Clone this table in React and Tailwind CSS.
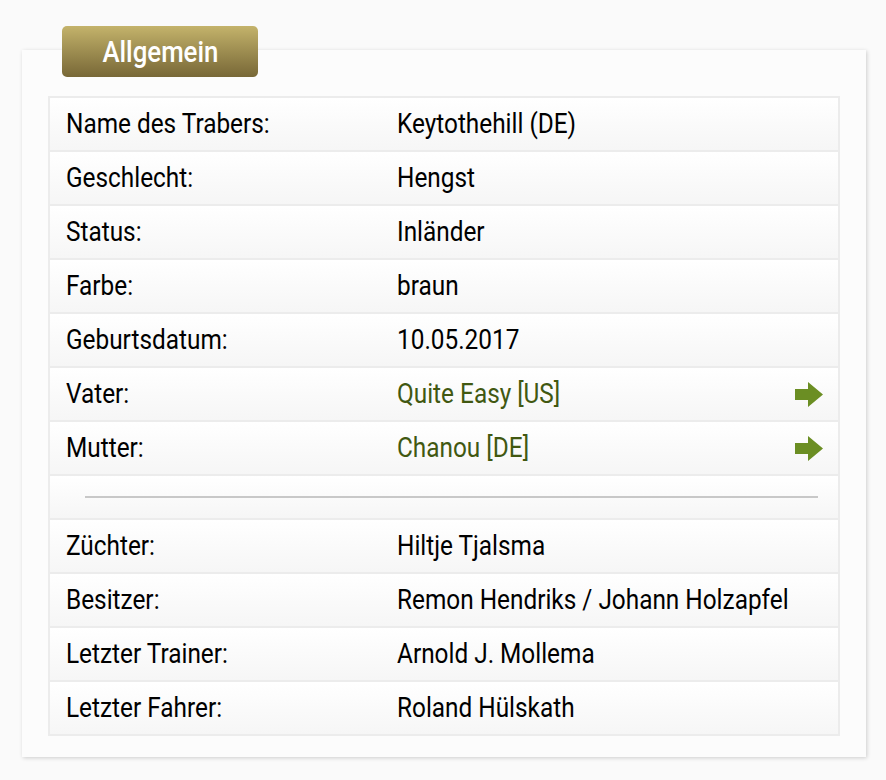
const rows = [
  { label: 'Name des Trabers:', value: 'Keytothehill (DE)' },
  { label: 'Geschlecht:', value: 'Hengst' },
  { label: 'Status:', value: 'Inländer' },
  { label: 'Farbe:', value: 'braun' },
  { label: 'Geburtsdatum:', value: '10.05.2017' },
  { label: 'Vater:', value: 'Quite Easy [US]', link: true },
  { label: 'Mutter:', value: 'Chanou [DE]', link: true },
];

const rows2 = [
  { label: 'Züchter:', value: 'Hiltje Tjalsma' },
  { label: 'Besitzer:', value: 'Remon Hendriks / Johann Holzapfel' },
  { label: 'Letzter Trainer:', value: 'Arnold J. Mollema' },
  { label: 'Letzter Fahrer:', value: 'Roland Hülskath' },
];

// condensed look: Roboto squeezed horizontally
function Cond({ children }) {
  return <span className="inline-block origin-left scale-x-[0.87] whitespace-nowrap">{children}</span>;
}

function Arrow() {
  return (
    <svg width="28" height="25" viewBox="0 0 28 25" className="block">
      <path d="M0 7 H13 V0 L28 12.5 L13 25 V18 H0 Z" fill="#6b8e23" />
    </svg>
  );
}

function Row({ label, value, link, first }) {
  return (
    <div
      className={`flex items-center bg-gradient-to-b from-white to-[#f6f6f6] ${
        first ? 'h-[52px]' : 'h-[54px] border-t-2 border-[#ececec]'
      }`}
    >
      <div className="w-[347px] shrink-0 pl-4 text-black">
        <Cond>{label}</Cond>
      </div>
      <div className={`flex-1 ${link ? 'text-[#415811]' : 'text-black'}`}>
        <Cond>{value}</Cond>
      </div>
      {link && (
        <div className="pr-[15px]">
          <Arrow />
        </div>
      )}
    </div>
  );
}

export default function App() {
  return (
    <div className="min-h-[780px] bg-[#fafafa] pt-[50px] pl-[22px] pr-[20px] font-['Roboto',sans-serif] text-[28px] leading-none">
      <div className="relative bg-[#fcfcfc] px-[26px] pt-[46px] pb-[21px] shadow-[1px_1px_4px_rgba(0,0,0,0.18)]">
        <div className="absolute left-[40px] top-[-24px] flex h-[51px] w-[196px] items-center justify-center rounded-[5px] bg-gradient-to-b from-[#c4b36b] to-[#786837] text-[30px] font-medium text-white">
          <span className="inline-block scale-x-[0.86]">Allgemein</span>
        </div>
        <div className="border-2 border-[#ececec]">
          {rows.map((r, i) => (
            <Row key={r.label} {...r} first={i === 0} />
          ))}
          <div className="flex h-[44px] items-center border-t-2 border-[#ececec] bg-gradient-to-b from-white to-[#f6f6f6] pl-[35px] pr-[20px]">
            <div className="h-[2px] w-full bg-[#c8c8c8]" />
          </div>
          {rows2.map((r) => (
            <Row key={r.label} {...r} />
          ))}
        </div>
      </div>
    </div>
  );
}
